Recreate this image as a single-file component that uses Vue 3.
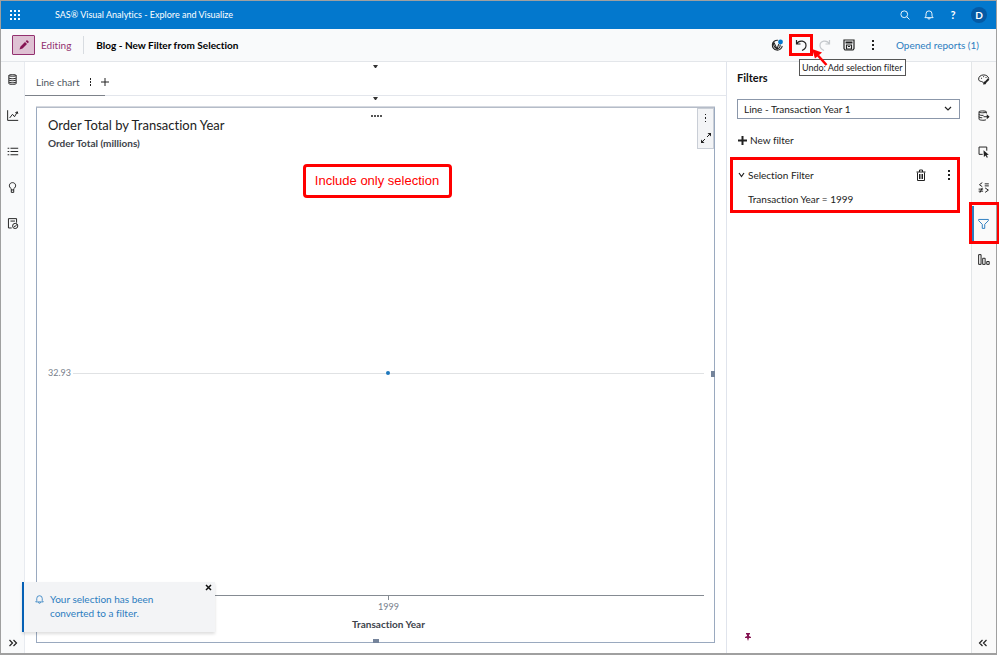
<script setup>
import { ref } from 'vue'

const target = ref('Line - Transaction Year 1')

const leftTools = [
  { name: 'Data', paths: ['M3.5 3c0-1.3 9-1.3 9 0s-9 1.3-9 0v10c0 1.3 9 1.3 9 0V3', 'M3.5 6c0 1.3 9 1.3 9 0M3.5 8.5c0 1.3 9 1.3 9 0M3.5 11c0 1.3 9 1.3 9 0'] },
  { name: 'Objects', paths: ['M2 1.500v12.500H15', 'M4.500 11 8 6.500l2.500 3L14 3.500', 'M11.500 4.500 14 3.500l.500 2.500'] },
  { name: 'Outline', paths: ['M5.500 4h9.500M5.500 8h9.500M5.500 12h9.500', 'M2 4h2M2 8h2M2 12h2'] },
  { name: 'Suggestions', paths: ['M6.500 11V9.500C2.500 7 4 2 8 2s5.500 5 1.500 7.500V11z', 'M6.500 11v3h3v-3'] },
  { name: 'Review', paths: ['M7 13.500H3v-11.500h10V7', 'M5.500 5h5.500', 'M14.500 11a3.200 3.200 0 1 1-6.400 0 3.200 3.200 0 0 1 6.400 0', 'M9.800 11l1.200 1 2.500-3'] }
]

const rightTools = [
  { name: 'Options', paths: ['M7.500 12c0-2.500-5.500-.500-5.500-4.500 0-6.500 11.500-7 12.500-.500', 'M5 6.500h1.200M7.500 4.500h1.200M10.500 5.500h1.200'], solid: 'M7.500 14l.500-3 2-1 3.500-3.500 1.700 1.700-3.500 3.500-1.200 2z' },
  { name: 'Roles', paths: ['M11.500 5.500V3.500c0-1.500-9-1.500-9 0s9 1.500 9 0', 'M2.500 3.500V12.500c0 1.300 6 1.800 8.500.800', 'M2.500 6.500c0 1.200 3 1.500 5.500 1.300M2.500 9.500c0 1 2 1.300 4 1.300', 'M8 9.500h6.500'], solid: 'M12 6.500l3.500 3-3.500 3z' },
  { name: 'Actions', paths: ['M7 11.500H2.500v-9h9.500V7'], solid: 'M8 6.500l6.500 5.500-2.700.300 1.600 2.700-1.300.700-1.500-2.700L8.500 14.800z' },
  { name: 'Rules', paths: ['M6.500 2 3 4.500 6.500 7M9.500 3.500h5M9.500 6h5', 'M2 10h5.500M2 12.500h5.500M6.500 8.500l-3 6M10 8.500l4 2.700-4 2.800'] },
  { name: 'Filters', paths: ['M2 3h12v1.500L9.500 9v5h-3V9L2 4.500z'], active: true },
  { name: 'Ranks', paths: ['M2 2h3v12H2zM7 6.500h3v7.500H7zM12 10.500h3v3.500h-3z'] }
]
</script>

<template>
  <div class="app">
    <header class="banner">
      <button class="icon-btn grid-btn" aria-label="Applications">
        <svg width="12" height="12" viewBox="0 0 12 12" fill="currentColor">
          <path d="M1 1h2v2H1zM5 1h2v2H5zM9 1h2v2H9zM1 5h2v2H1zM5 5h2v2H5zM9 5h2v2H9zM1 9h2v2H1zM5 9h2v2H5zM9 9h2v2H9z" />
        </svg>
      </button>
      <span class="product">SAS® Visual Analytics - Explore and Visualize</span>
      <nav class="banner-actions">
        <button class="icon-btn" aria-label="Search">
          <svg class="line" width="12" height="12" viewBox="0 0 16 16"><circle cx="7" cy="7" r="4.500" /><path d="M10.500 10.500 14 14" /></svg>
        </button>
        <button class="icon-btn" aria-label="Notifications">
          <svg class="line" width="12" height="12" viewBox="0 0 16 16"><path d="M2.500 11.500h11L12 9.500V6.500a4 4 0 0 0-8 0v3zM6.500 12a1.500 1.500 0 0 0 3 0" /></svg>
        </button>
        <button class="icon-btn help" aria-label="Help">?</button>
        <button class="avatar" aria-label="Account">D</button>
      </nav>
    </header>

    <div class="toolbar">
      <button class="edit-btn" aria-label="Edit mode">
        <svg width="12" height="12" viewBox="0 0 12 12" fill="currentColor"><path d="M1.500 10.500l1-3 4.500-4.500 2 2L4.500 9.500zM7.700 2.300l1.300-1.300 2 2-1.300 1.300z" /></svg>
      </button>
      <span class="editing">Editing</span>
      <h1 class="report-name">Blog - New Filter from Selection</h1>
      <div class="tools">
        <button class="icon-btn" aria-label="Refresh">
          <svg class="line" width="14" height="14" viewBox="0 0 16 16">
            <path d="M9 2.500a5.700 5.700 0 1 0 5 6.500" />
            <path d="M4.500 5l3.500 7.500L10 7M4.500 5c-1.500 2.500.500 6 3.500 7.500M8 12.500c2.500-.500 4-2 3.500-5" />
            <circle cx="12" cy="4.500" r="2.800" class="dot" />
          </svg>
        </button>
        <div class="undo-wrap">
          <button class="icon-btn undo" aria-label="Undo: Add selection filter">
            <svg class="line" width="14" height="14" viewBox="0 0 14 14"><path d="M2.500 2v4h4M2.500 6C5.500 1 12 3 12 7.500 12 10 10.500 11.500 8 12.500" /></svg>
          </button>
          <svg class="arrow" width="17" height="18" viewBox="0 0 17 18"><path d="M15.500 17 7 7.500" stroke="#f00" stroke-width="2.500" /><path d="M1 1l3 9.500 7-6z" fill="#f00" /></svg>
          <div class="tooltip" role="tooltip">Undo: Add selection filter</div>
        </div>
        <button class="icon-btn redo" aria-label="Redo" disabled>
          <svg class="line" width="14" height="14" viewBox="0 0 14 14"><path d="M11.500 2v4h-4M11.500 6C8.500 1 2 3 2 7.500 2 10 3.500 11.500 6 12.500" /></svg>
        </button>
        <button class="icon-btn" aria-label="Save">
          <svg class="line" width="14" height="14" viewBox="0 0 14 14"><path d="M2 2h10v8.500L11 12H3l-1-1.500z" /><path d="M3.500 4.500h7" stroke-width="2" /><path d="M4.500 7h5v4h-5zM6 8.500h2" /></svg>
        </button>
        <button class="icon-btn" aria-label="More">
          <svg width="4" height="12" viewBox="0 0 4 12" fill="currentColor"><path d="M1 1h2v2H1zM1 5h2v2H1zM1 9h2v2H1z" /></svg>
        </button>
        <a class="opened" href="#">Opened reports (1)</a>
      </div>
    </div>

    <div class="body">
      <aside class="rail rail-left">
        <button v-for="t in leftTools" :key="t.name" class="rail-btn" :aria-label="t.name">
          <svg class="line" width="13" height="13" viewBox="0 0 16 16"><path v-for="p in t.paths" :key="p" :d="p" /></svg>
        </button>
        <button class="rail-btn expand" aria-label="Expand">
          <svg class="line" width="10" height="10" viewBox="0 0 10 10"><path d="M1.500 2l3 3-3 3M5.500 2l3 3-3 3" /></svg>
        </button>
      </aside>

      <main class="canvas">
        <div class="tabs">
          <svg class="caret" width="5" height="4" viewBox="0 0 5 4"><path d="M0 0h5L3 3H2z" /></svg>
          <div class="tab">
            <button class="tab-label">Line chart</button>
            <button class="icon-btn" aria-label="Page menu">
              <svg width="3" height="10" viewBox="0 0 3 10" fill="currentColor"><path d="M1 1h1v2H1zM1 4h1v2H1zM1 7h1v2H1z" /></svg>
            </button>
            <button class="icon-btn add-page" aria-label="Add page">
              <svg width="8" height="8" viewBox="0 0 8 8" stroke="currentColor"><path d="M4 0v8M0 4h8" /></svg>
            </button>
          </div>
        </div>

        <div class="page">
          <svg class="caret" width="5" height="4" viewBox="0 0 5 4"><path d="M0 0h5L3 3H2z" /></svg>
          <section class="chart">
            <svg class="grip" width="11" height="2" viewBox="0 0 11 2"><path d="M0 0h2v2H0zM3 0h2v2H3zM6 0h2v2H6zM9 0h2v2H9z" /></svg>
            <div class="chart-menu">
              <button class="icon-btn" aria-label="Chart menu">
                <svg width="3" height="10" viewBox="0 0 3 10" fill="currentColor"><path d="M1 1h1v1H1zM1 4h1v2H1zM1 8h1v1H1z" /></svg>
              </button>
              <button class="icon-btn" aria-label="Maximize">
                <svg width="12" height="12" viewBox="0 0 12 12" fill="none" stroke="currentColor"><path d="M7 5l4-4M5 7l-4 4" /><path d="M7.500 1H11v3.500zM1 7.500V11h3.500z" fill="currentColor" stroke="none" /></svg>
              </button>
            </div>
            <h2 class="chart-title">Order Total by Transaction Year</h2>
            <p class="y-title">Order Total (millions)</p>
            <div class="plot">
              <span class="tick-label">32.93</span>
              <div class="gridline"><span class="point"></span></div>
            </div>
            <div class="axis">
              <span class="tick"></span>
              <span class="tick-label">1999</span>
              <span class="x-title">Transaction Year</span>
            </div>
            <span class="handle handle-right"></span>
            <span class="handle handle-bottom"></span>
            <div class="callout">Include only selection</div>
          </section>
        </div>
      </main>

      <section class="filters">
        <h2 class="filters-title">Filters</h2>
        <div class="select-wrap">
          <select v-model="target" aria-label="Filtered object">
            <option>Line - Transaction Year 1</option>
          </select>
          <svg class="line chevron" width="8" height="6" viewBox="0 0 8 6"><path d="M1 1l3 3 3-3" /></svg>
        </div>
        <button class="new-filter">
          <svg width="9" height="9" viewBox="0 0 9 9" stroke="currentColor" stroke-width="2"><path d="M4.500 0v9M0 4.500h9" /></svg>
          New filter
        </button>
        <div class="filter-card">
          <div class="filter-head">
            <button class="filter-toggle">
              <svg class="line" width="7" height="6" viewBox="0 0 7 6"><path d="M1 1l2.500 3.500L6 1" /></svg>
              Selection Filter
            </button>
            <button class="icon-btn" aria-label="Delete filter">
              <svg class="line trash" width="10" height="12" viewBox="0 0 10 12"><path d="M.500 3h9M3.500 3V1h3v2M1.500 3.500v8h7v-8M3.500 5v5M5 5v5M6.500 5v5" /></svg>
            </button>
            <button class="icon-btn" aria-label="Filter menu">
              <svg width="4" height="12" viewBox="0 0 4 12" fill="currentColor"><path d="M1 1h2v2H1zM1 5h2v2H1zM1 9h2v2H1z" /></svg>
            </button>
          </div>
          <p class="filter-text">Transaction Year = 1999</p>
        </div>
        <button class="icon-btn pin" aria-label="Pin pane">
          <svg width="6" height="8" viewBox="0 0 6 8" fill="currentColor"><path d="M1 0h4v1L4 2v1l2 1v1H4L3 8 2 5H0V4l2-1V2L1 1z" /></svg>
        </button>
      </section>

      <aside class="rail rail-right">
        <button v-for="t in rightTools" :key="t.name" class="rail-btn" :class="{ active: t.active }" :aria-label="t.name">
          <svg class="line" width="13" height="13" viewBox="0 0 16 16">
            <path v-for="p in t.paths" :key="p" :d="p" />
            <path v-if="t.solid" :d="t.solid" class="solid" />
          </svg>
        </button>
        <button class="rail-btn expand" aria-label="Collapse">
          <svg class="line" width="10" height="10" viewBox="0 0 10 10"><path d="M4.500 2l-3 3 3 3M8.500 2l-3 3 3 3" /></svg>
        </button>
      </aside>
    </div>

    <div class="toast" role="status">
      <svg class="line" width="11" height="11" viewBox="0 0 16 16"><path d="M2.500 11.500h11L12 9.500V6.500a4 4 0 0 0-8 0v3zM6.500 12a1.500 1.500 0 0 0 3 0" /></svg>
      <p>Your selection has been converted to a filter.</p>
      <button class="icon-btn close" aria-label="Close">
        <svg width="7" height="7" viewBox="0 0 7 7" stroke="currentColor" stroke-width="1.500"><path d="M1 1l5 5M6 1L1 6" /></svg>
      </button>
    </div>
  </div>
</template>

<style>
body {
  background: #fff;
}
</style>

<style scoped>
* {
  box-sizing: border-box;
  margin: 0;
}
.app {
  position: relative;
  display: flex;
  flex-direction: column;
  min-height: 100vh;
  margin-right: 2px;
  border: solid #a0a0a0;
  border-width: 1px 1px 2px;
  font: 10px/14px Lato, 'Open Sans', sans-serif;
  font-variant-ligatures: none;
  color: #222;
}
button {
  padding: 0;
  border: 0;
  background: none;
  font: inherit;
  color: inherit;
}
.icon-btn {
  display: flex;
  align-items: center;
  justify-content: center;
}
svg {
  display: block;
  flex: none;
}
.line {
  fill: none;
  stroke: currentColor;
  stroke-width: 1.2;
}
.line .solid {
  fill: currentColor;
  stroke: none;
}
.line .dot {
  fill: #0378cd;
  stroke: none;
}
.trash {
  stroke-width: 1;
}
.banner {
  display: flex;
  align-items: center;
  height: 28px;
  padding: 0 9px 0 8px;
  background: #0378cd;
  color: #fff;
}
.product {
  margin-left: 34px;
  font-size: 9px;
}
.banner-actions {
  display: flex;
  align-items: center;
  gap: 12px;
  margin-left: auto;
}
.banner-actions .icon-btn {
  width: 12px;
}
.help {
  font-size: 11px;
  font-weight: 700;
}
.avatar {
  width: 16px;
  height: 16px;
  border-radius: 50%;
  background: #045aa5;
  font-weight: 700;
  line-height: 16px;
}
.toolbar {
  display: flex;
  align-items: center;
  height: 33px;
  padding: 0 17px 0 11px;
  border-bottom: 1px solid #e3e6ea;
  background: #f9fafb;
}
.edit-btn {
  display: flex;
  align-items: center;
  justify-content: center;
  width: 23px;
  height: 20px;
  border: 1px solid #93306f;
  border-radius: 1px;
  background: #dfc1d3;
  color: #861453;
}
.editing {
  padding: 2px 12px 2px 6px;
  border-right: 1px solid #d8dce1;
  color: #93306f;
}
.report-name {
  padding-left: 12px;
  font-size: 10px;
  color: #000;
}
.tools {
  display: flex;
  align-items: center;
  margin-left: auto;
}
.tools .icon-btn {
  width: 24px;
  height: 22px;
}
.undo-wrap {
  position: relative;
}
.tools .undo {
  border: 3px solid #f00;
}
.redo {
  color: #c4c8cc;
}
.arrow {
  position: absolute;
  top: 14px;
  left: 22px;
  z-index: 3;
}
.tooltip {
  position: absolute;
  top: 25px;
  left: 10px;
  z-index: 2;
  padding: 0 2px;
  border: 1px solid #555;
  background: #fff;
  font-size: 9px;
  line-height: 15px;
  white-space: nowrap;
}
.opened {
  margin-left: 11px;
  color: #2c7dc0;
  text-decoration: none;
}
.body {
  display: flex;
  flex: 1;
}
.rail {
  display: flex;
  flex-direction: column;
  width: 24px;
  background: #f9fafb;
}
.rail-left {
  border-right: 1px solid #e8ebf0;
}
.rail-right {
  width: 25px;
  border-left: 1px solid #e3e6e8;
  background: #fafafa;
}
.rail-btn {
  position: relative;
  display: flex;
  align-items: center;
  justify-content: center;
  height: 36px;
  padding-bottom: 2px;
}
.rail-right .rail-btn {
  padding-right: 2px;
}
.rail-right .active {
  padding-right: 4px;
  border-left: 2px solid #2c7dc0;
  color: #2c7dc0;
}
.rail-btn.active::after {
  content: '';
  position: absolute;
  inset: -4px -4px -2px -5px;
  border: 3px solid #f00;
}
.rail .expand {
  height: 20px;
  margin-top: auto;
  padding-bottom: 0;
}
.canvas {
  display: flex;
  flex: 1;
  flex-direction: column;
  min-width: 0;
}
.tabs {
  display: flex;
  flex-direction: column;
  justify-content: space-between;
  height: 34px;
  padding-top: 3px;
  border-bottom: 1px solid #e3e6ec;
}
.caret {
  align-self: center;
  fill: #333;
}
.tab {
  display: flex;
  align-items: center;
  align-self: flex-start;
  gap: 9px;
  height: 27px;
  margin-bottom: -1px;
  padding-left: 11px;
  border-bottom: 1px solid #7d828a;
}
.tab-label {
  color: #4d5560;
}
.add-page {
  margin-right: -4px;
}
.page {
  display: flex;
  flex: 1;
  flex-direction: column;
  gap: 6px;
  padding: 1px 11px 10px;
}
.chart {
  position: relative;
  display: flex;
  flex: 1;
  flex-direction: column;
  padding: 9px 10px 11px 11px;
  border: 1px solid #9aa9bf;
  border-top-color: #b5bcc8;
  box-shadow: 0 -1px #d5d9e0;
}
.grip {
  position: absolute;
  top: 7px;
  left: calc(50% - 5px);
  fill: #555;
}
.chart-menu {
  position: absolute;
  top: 0;
  right: 0;
  display: flex;
  flex-direction: column;
  justify-content: space-around;
  align-items: center;
  width: 17px;
  height: 41px;
  border: 1px solid #c9ced6;
  background: #f3f4f6;
}
.chart-title {
  font-size: 13px;
  font-weight: 400;
  line-height: 16px;
}
.y-title {
  margin: 3px 0 1px;
  font-size: 10px;
  font-weight: 700;
  color: #3d434b;
}
.plot {
  display: flex;
  flex: 1;
  align-items: center;
  gap: 3px;
}
.tick-label {
  font-size: 9px;
  color: #77808c;
}
.plot .tick-label {
  width: 22px;
}
.gridline {
  position: relative;
  flex: 1;
  border-top: 1px solid #e0e2e4;
}
.point {
  position: absolute;
  top: -3px;
  left: calc(50% - 3px);
  width: 4px;
  height: 4px;
  border-radius: 50%;
  background: #1d78bd;
}
.axis {
  display: flex;
  flex-direction: column;
  align-items: center;
  margin-left: 25px;
  border-top: 1px solid #858b92;
}
.tick {
  width: 1px;
  height: 4px;
  background: #858b92;
}
.x-title {
  margin-top: 3px;
  font-size: 10px;
  font-weight: 700;
  color: #3d434b;
}
.handle {
  position: absolute;
  background: #75849b;
}
.handle-right {
  top: 50%;
  right: -1px;
  width: 4px;
  height: 6px;
  margin-top: -4px;
}
.handle-bottom {
  bottom: -1px;
  left: calc(50% - 3px);
  width: 6px;
  height: 4px;
}
.callout {
  position: absolute;
  top: 56px;
  left: calc(50% - 73px);
  width: 149px;
  height: 34px;
  border: 3px solid #f00;
  border-radius: 4px;
  background: #fff;
  font: 13px/28px 'Liberation Sans', Arial, sans-serif;
  text-align: center;
  white-space: nowrap;
  color: #f00;
}
.filters {
  display: flex;
  flex-direction: column;
  width: 245px;
  padding: 9px 11px 12px 10px;
  border-left: 1px solid #e0e4ec;
}
.filters-title {
  font-size: 11px;
  color: #111;
}
.select-wrap {
  display: flex;
  align-items: center;
  margin-top: 14px;
}
select {
  flex: 1;
  height: 20px;
  padding: 0 6px;
  border: 1px solid #8b97aa;
  border-radius: 0;
  background: #fff;
  font: inherit;
  color: inherit;
  appearance: none;
}
.chevron {
  margin: 0 8px 0 -16px;
  pointer-events: none;
}
.new-filter {
  display: flex;
  align-items: center;
  align-self: flex-start;
  gap: 3px;
  margin: 14px 0 10px 1px;
}
.filter-card {
  height: 56px;
  margin: 0 0 0 -7px;
  padding: 8px 6px 0 5px;
  border: 3px solid #f00;
}
.filter-head {
  display: flex;
  align-items: center;
  gap: 21px;
}
.filter-toggle {
  display: flex;
  align-items: center;
  gap: 3px;
  margin-right: auto;
}
.filter-text {
  margin: 10px 0 0 10px;
}
.pin {
  margin: auto 0 0 8px;
  align-self: flex-start;
  color: #861453;
}
.toast {
  position: absolute;
  bottom: 21px;
  left: 21px;
  display: flex;
  gap: 5px;
  width: 193px;
  height: 50px;
  padding: 10px 28px 0 10px;
  border-left: 2px solid #0560b5;
  background: #f3f4f6;
  box-shadow: 0 2px 3px #0002;
  color: #2c7dc0;
}
.toast > .line {
  margin-top: 2px;
}
.close {
  position: absolute;
  top: 2px;
  right: 3px;
  color: #111;
}
</style>
